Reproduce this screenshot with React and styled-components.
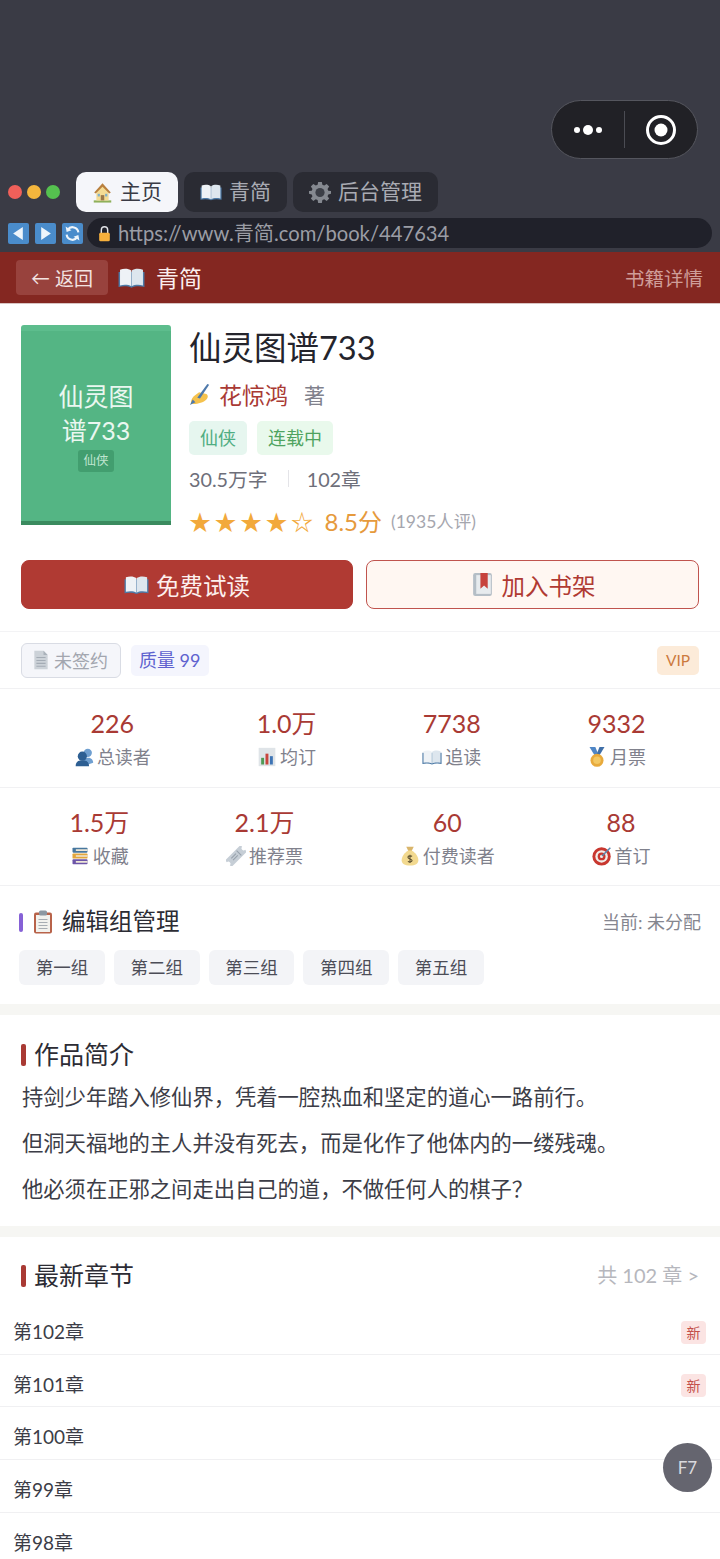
import React from "react"
import styled, { createGlobalStyle } from "styled-components"

const Global = createGlobalStyle`
  html, body { margin: 0; padding: 0; background: #fff; }
  body { font-family: Lato, "Noto Sans CJK SC", "Noto Sans", sans-serif; color: #2c2c34; }
  * { box-sizing: border-box; }
`

const Page = styled.div`
  width: 720px;
  height: 1559px;
  overflow: hidden;
  position: relative;
  background: #fff;
`

/* browser chrome */
const Chrome = styled.div`
  background: #3a3b45;
  height: 252px;
  display: flex;
  flex-direction: column;
`
const CapsuleRow = styled.div`
  height: 172px;
  padding: 100px 22px 0 0;
  display: flex;
  justify-content: flex-end;
  align-items: flex-start;
`
const Capsule = styled.div`
  width: 147px;
  height: 59px;
  border-radius: 30px;
  background: #212126;
  border: 1px solid #55565e;
  display: flex;
  align-items: center;
`
const CapsuleHalf = styled.div`
  flex: 1;
  display: flex;
  align-items: center;
  justify-content: center;
  gap: 3px;
`
const CapsuleLine = styled.div`
  width: 1px;
  height: 37px;
  background: #4b4c53;
`
const MenuDot = styled.span`
  width: ${p => p.$size}px;
  height: ${p => p.$size}px;
  border-radius: 50%;
  background: #fff;
`
const TabRow = styled.div`
  display: flex;
  align-items: center;
  height: 40px;
  padding-left: 8px;
`
const Light = styled.span`
  width: 14px;
  height: 14px;
  border-radius: 50%;
  margin-right: 5px;
  background: ${p => p.$color};
`
const Tabs = styled.div`
  display: flex;
  gap: 6px;
  margin-left: 11px;
`
const Tab = styled.div`
  height: 40px;
  padding: 0 16px;
  border-radius: 10px;
  display: flex;
  align-items: center;
  gap: 7px;
  font-size: 21px;
  background: ${p => (p.$active ? "#f5f6fa" : "#2a2b33")};
  color: ${p => (p.$active ? "#3a3b45" : "#a9abb3")};
`
const TabLabel = styled.span`
  padding-bottom: 4px;
`
const AddressRow = styled.div`
  display: flex;
  align-items: center;
  height: 30px;
  margin-top: 6px;
  padding: 0 8px;
  gap: 6px;
`
const NavKey = styled.span`
  width: 21px;
  height: 21px;
  flex: none;
  border-radius: 2px;
  background: #4a8ccb;
  display: flex;
  align-items: center;
  justify-content: center;
`
const AddressBar = styled.div`
  flex: 1;
  height: 30px;
  margin-left: -2px;
  border-radius: 15px;
  background: #20212a;
  color: #9b9da5;
  font-size: 20.2px;
  display: flex;
  align-items: center;
  gap: 5px;
  padding-left: 9px;
  white-space: nowrap;
`
const AddressText = styled.span`
  padding-bottom: 2px;
`

/* red header */
const Header = styled.header`
  height: 52px;
  background: #842721;
  border-bottom: 1px solid #d9c4c2;
  display: flex;
  align-items: center;
  padding: 0 17px 0 16px;
`
const BackButton = styled.div`
  width: 92px;
  height: 35px;
  border-radius: 4px;
  background: #98423d;
  color: #f3e3e1;
  font-size: 19px;
  display: flex;
  align-items: center;
  justify-content: center;
  gap: 5px;
`
const BrandName = styled.div`
  font-size: 23px;
  color: #fbeeee;
  margin-left: 10px;
  display: flex;
  align-items: center;
  gap: 11px;
`
const BrandText = styled.span`
  padding-bottom: 2px;
`
const HeaderRight = styled.div`
  margin-left: auto;
  font-size: 19.5px;
  color: #cf9d99;
`

/* book info */
const Info = styled.section`
  padding: 21px 21px 0;
  border-bottom: 1px solid #f3f3f5;
  height: 328px;
`
const InfoTop = styled.div`
  display: flex;
  gap: 18px;
`
const Cover = styled.div`
  width: 150px;
  height: 200px;
  flex: none;
  background: #54b584;
  border-top: 6px solid #5dbd8d;
  border-bottom: 4px solid #3a8b5f;
  border-radius: 3px 3px 0 0;
  color: #eaf7f0;
  display: flex;
  flex-direction: column;
  align-items: center;
  justify-content: center;
  text-align: center;
  padding-bottom: 1px;
`
const CoverTitle = styled.div`
  font-size: 25px;
  line-height: 34px;
  width: 90px;
  word-break: break-all;
`
const CoverTag = styled.div`
  margin-top: 3px;
  height: 22px;
  padding: 0 5px;
  border-radius: 3px;
  font-size: 12.5px;
  line-height: 22px;
  background: #429e6f;
  color: #bfe5d0;
`
const Meta = styled.div`
  flex: 1;
  min-width: 0;
`
const Title = styled.h1`
  margin: 0;
  height: 46px;
  font-size: 32.5px;
  font-weight: 400;
  line-height: 46px;
  color: #24242c;
`
const AuthorRow = styled.div`
  margin-top: 6px;
  height: 34px;
  display: flex;
  align-items: center;
  font-size: 23px;
  color: #a93a34;
  gap: 8px;
`
const AuthorSuffix = styled.span`
  font-size: 21px;
  color: #80818c;
  margin-left: 8px;
`
const TagRow = styled.div`
  display: flex;
  gap: 10px;
  margin-top: 10px;
`
const Tag = styled.span`
  height: 34px;
  padding: 0 11px;
  border-radius: 5px;
  font-size: 18px;
  line-height: 34px;
  background: ${p => p.$bg};
  color: ${p => p.$color};
`
const CountRow = styled.div`
  display: flex;
  align-items: center;
  height: 30px;
  margin-top: 8px;
  font-size: 19.8px;
  color: #6e6f7a;
`
const CountLine = styled.span`
  width: 1px;
  height: 17px;
  background: #e4e4e8;
  margin: 0 18px 0 20px;
`
const RatingRow = styled.div`
  display: flex;
  align-items: center;
  height: 34px;
  margin-top: 10px;
`
const Stars = styled.span`
  font-size: 22px;
  letter-spacing: 3.5px;
  color: #f2a93b;
  white-space: nowrap;
`
const Score = styled.span`
  font-size: 24px;
  color: #e69a3c;
  margin-left: 8px;
`
const ScoreCount = styled.span`
  font-size: 17.5px;
  color: #a5a6ae;
  margin-left: 9px;
`
const ActionRow = styled.div`
  display: grid;
  grid-template-columns: 332px 333px;
  gap: 13px;
  margin-top: 23px;
`
const Action = styled.div`
  height: 49px;
  border-radius: 8px;
  display: flex;
  align-items: center;
  justify-content: center;
  gap: 7px;
  font-size: 23.5px;
  background: ${p => (p.$solid ? "#b03a33" : "#fff7f2")};
  color: ${p => (p.$solid ? "#fdf0ee" : "#b03a33")};
  border: 1.5px solid ${p => (p.$solid ? "#b03a33" : "#c0544e")};
`

/* badges */
const BadgeRow = styled.div`
  height: 57px;
  padding: 0 21px;
  display: flex;
  align-items: center;
  gap: 10px;
  border-bottom: 1px solid #f1f1f3;
`
const Unsigned = styled.div`
  height: 35px;
  padding: 0 12px 0 9px;
  border-radius: 6px;
  background: #f5f6fa;
  border: 1.5px solid #d9dce4;
  color: #a3a6af;
  font-size: 18px;
  display: flex;
  align-items: center;
  gap: 3px;
`
const Quality = styled.div`
  height: 31px;
  padding: 0 8px;
  border-radius: 5px;
  background: #f4f5fd;
  color: #5e62cf;
  font-size: 18px;
  line-height: 31px;
`
const Vip = styled.div`
  margin-left: auto;
  height: 29px;
  width: 42px;
  text-align: center;
  border-radius: 5px;
  background: #fcebd9;
  color: #cc7a3e;
  font-size: 15.5px;
  line-height: 29px;
`

/* numbers */
const StatRow = styled.div`
  height: ${p => p.$h}px;
  display: flex;
  justify-content: space-around;
  padding: 0 21px;
  border-bottom: 1px solid #f1f1f3;
`
const Stat = styled.div`
  display: flex;
  flex-direction: column;
  align-items: center;
  padding-top: 16px;
`
const StatValue = styled.div`
  font-size: 25px;
  line-height: 36px;
  color: #a93a34;
`
const StatLabel = styled.div`
  font-size: 18px;
  line-height: 26px;
  margin-top: 3px;
  color: #80818c;
  display: flex;
  align-items: center;
  gap: 3px;
`

/* editor group */
const EditorSection = styled.section`
  height: 118px;
  padding: 18px 19px 0;
`
const SectionHead = styled.div`
  display: flex;
  align-items: center;
  height: 36px;
`
const HeadMark = styled.span`
  width: ${p => p.$w}px;
  height: ${p => p.$h}px;
  margin-right: 8px;
  border-radius: 2px;
  background: ${p => p.$color};
  flex: none;
`
const HeadIcon = styled.span`
  margin-right: 7px;
`
const SectionTitle = styled.h2`
  margin: 0;
  padding-bottom: 5px;
  font-size: ${p => p.$size}px;
  font-weight: 400;
  color: #2c2c34;
`
const SectionNote = styled.span`
  margin-left: auto;
  padding-bottom: 3px;
  font-size: ${p => p.$size}px;
  color: ${p => p.$color};
`
const GroupRow = styled.div`
  display: flex;
  gap: 9px;
  margin-top: 10px;
`
const GroupChip = styled.div`
  width: 85.8px;
  height: 35px;
  border-radius: 6px;
  background: #f3f4f7;
  color: #4c4d57;
  font-size: 17.5px;
  line-height: 35px;
  text-align: center;
`
const Band = styled.div`
  height: 11px;
  background: #f6f6f3;
`

/* intro */
const IntroSection = styled.section`
  height: 211px;
  padding: 22px 21px 0;
`
const IntroText = styled.p`
  margin: ${p => p.$top}px 0 0 1px;
  font-size: 21.3px;
  line-height: 30px;
  color: #3c3d47;
  white-space: nowrap;
`

/* chapters */
const ChapterHead = styled.div`
  height: 65px;
  padding: 13px 21px 0;
  display: flex;
  align-items: center;
`
const ChapterRow = styled.div`
  height: 52.7px;
  padding: 5px 14px 0 13px;
  display: flex;
  align-items: center;
  font-size: 19px;
  color: #3c3d47;
  border-bottom: 1px solid #f0f0f2;
`
const NewMark = styled.span`
  margin: 4px 0 0 auto;
  width: 25px;
  height: 23px;
  border-radius: 4px;
  background: #fbe4e3;
  color: #c3504a;
  font-size: 14px;
  line-height: 23px;
  text-align: center;
`
const Float = styled.div`
  position: absolute;
  left: 663px;
  top: 1443px;
  width: 49px;
  height: 49px;
  border-radius: 50%;
  background: #65656f;
  color: #d9d9de;
  font-size: 17px;
  line-height: 49px;
  text-align: center;
`

const IconSvg = styled.svg`
  width: ${p => p.$size}px;
  height: ${p => p.$size}px;
  flex: none;
  display: block;
`

// small drawings standing in for the colour emoji of the screenshot
const drawings = {
  house: (
    <>
      <path d="M2 21h20v2.500H2z" fill="#8fb05a" />
      <path d="M5 11l7-7 7 7v10H5z" fill="#f5dc94" />
      <path d="M12 1.500L2.500 12l1.800 1.200L12 5.500l7.700 7.700 1.800-1.200z" fill="#b9803f" />
      <path d="M10 15h4v6h-4z" fill="#9c7a4a" />
      <rect x="6.500" y="13.500" width="2.500" height="3" fill="#7fb0cc" />
      <rect x="15" y="13.500" width="2.500" height="3" fill="#7fb0cc" />
    </>
  ),
  book: (
    <>
      <path d="M.5 7h23v13.500c-4-1-8-1-11.500.5-3.500-1.500-7.500-1.500-11.500-.5z" fill="#4d7aa6" />
      <path d="M1.800 5c3.700-1.300 7.700-1 10 .8v14c-2.300-1.500-6.300-1.700-10-.8z" fill="#eef2f6" />
      <path d="M22.200 5c-3.700-1.300-7.700-1-10 .8v14c2.300-1.500 6.300-1.700 10-.8z" fill="#dde6ee" />
    </>
  ),
  gear: (
    <>
      <path
        d="M10 1h4l.6 3.200 2 .8L19.300 3.200 22 6l-1.800 2.600.8 2L24 11v3l-3 .6-.8 2L22 19l-2.700 2.800-2.700-1.800-2 .8L14 24h-4l-.6-3.200-2-.8L4.700 21.800 2 19l1.800-2.400-.8-2L0 14v-3l3-.4.8-2L2 6l2.700-2.800L7.400 5l2-.8z"
        fill="#858990"
      />
      <circle cx="12" cy="12.500" r="5" fill="#3c3f47" />
    </>
  ),
  lock: (
    <>
      <path d="M7.500 12V7a4.500 4.500 0 019 0v5" fill="none" stroke="#e2e3e8" strokeWidth="2" />
      <rect x="4.500" y="11" width="15" height="12" rx="2" fill="#f7b03c" />
    </>
  ),
  writing: (
    <>
      <path d="M2 22c0-4 2-7 5-9l4-3 3 1 5 1c2 1 2 4 0 6-3 3-9 5-14 5z" fill="#f5c24d" />
      <path d="M20 1l2 1-10 15-3-1z" fill="#4e79ab" />
      <path d="M1 24l3-6 3 3z" fill="#4e79ab" />
    </>
  ),
  bookmark: (
    <>
      <rect x="3" y="1" width="18" height="22" rx="2" fill="#b5bec6" />
      <rect x="6" y="3" width="14" height="18" fill="#e7ebee" />
      <path d="M10 1h7v15l-3.500-3-3.500 3z" fill="#c7423c" />
    </>
  ),
  doc: (
    <>
      <path d="M4 1h11l5 5v17H4z" fill="#ccd2d8" />
      <path d="M15 1l5 5h-5z" fill="#aab2ba" />
      <path d="M6.500 9h11M6.500 12.500h11M6.500 16h11M6.500 19.500h11" stroke="#a4acb5" strokeWidth="1.300" />
    </>
  ),
  users: (
    <>
      <circle cx="16.500" cy="7" r="5" fill="#6f9fd0" />
      <path d="M10 21c0-5 3-8 7-8s6 3 6 6l-6 2z" fill="#6f9fd0" />
      <circle cx="10" cy="11" r="5.500" fill="#2d5f93" />
      <path d="M2 23c0-5 3-7 8-7s8 2 8 7z" fill="#2d5f93" />
    </>
  ),
  chart: (
    <>
      <rect x="2" y="1" width="20" height="22" fill="#dfe4e8" />
      <rect x="5" y="13" width="3.500" height="8" fill="#4f9a55" />
      <rect x="10.200" y="8" width="3.500" height="13" fill="#c8453d" />
      <rect x="15.500" y="11" width="3.500" height="10" fill="#3d74b5" />
    </>
  ),
  medal: (
    <>
      <path d="M3 0h7l4 10H9z" fill="#4f86c6" />
      <path d="M21 0h-6l-4 10h4z" fill="#3f6fa8" />
      <circle cx="12" cy="16" r="7.800" fill="#e8aa3c" />
      <circle cx="12" cy="16" r="4.500" fill="#f3c863" />
    </>
  ),
  books: (
    <>
      <rect x="3" y="2" width="18" height="6" rx="1" fill="#47779e" />
      <rect x="3" y="9" width="18" height="6" rx="1" fill="#e2a63d" />
      <rect x="3" y="16" width="18" height="6" rx="1" fill="#6d55a8" />
      <path d="M7 4h14v2H7zM7 11h14v2H7zM7 18h14v2H7z" fill="#eee7d8" />
    </>
  ),
  ticket: (
    <g transform="rotate(-45 12 12)">
      <path d="M-1 6.500h26v3a2.500 2.500 0 000 5v3H-1v-3a2.500 2.500 0 000-5z" fill="#c6ced6" />
      <path d="M6 10h8M6 13h8M17 8v8" stroke="#98a2ad" strokeWidth="1.300" />
    </g>
  ),
  money: (
    <>
      <path d="M7.500 1h9l-2.500 5h-4z" fill="#d9b56a" />
      <path d="M10 5.500h4c5.500 3 8 8 8 11.500 0 4-3.500 6.500-10 6.500S2 21 2 17c0-3.500 2.500-8.500 8-11.500z" fill="#f2d98f" />
      <path
        d="M14.500 12.500c-1-1-5-1-5 1 0 2.500 5 1.500 5 4 0 2-4 2-5 1M12 10.500v10"
        fill="none"
        stroke="#5d5131"
        strokeWidth="1.300"
      />
    </>
  ),
  target: (
    <>
      <circle cx="11.500" cy="12.500" r="11" fill="#c8372f" />
      <circle cx="11.500" cy="12.500" r="7.500" fill="#f1ece8" />
      <circle cx="11.500" cy="12.500" r="4.700" fill="#c8372f" />
      <circle cx="11.500" cy="12.500" r="1.900" fill="#f1ece8" />
      <path d="M12 12L22 2" stroke="#5b86ad" strokeWidth="1.800" />
    </>
  ),
  clipboard: (
    <>
      <rect x="3" y="2.500" width="18" height="21" rx="2" fill="#b8634a" />
      <rect x="5" y="5" width="14" height="17" fill="#f2f2ee" />
      <rect x="8" y="0.500" width="8" height="5" rx="1.500" fill="#8c98a2" />
      <path d="M7.500 9.500h9M7.500 12.500h9M7.500 15.500h9M7.500 18.500h9" stroke="#a7adb3" strokeWidth="1.200" />
    </>
  ),
}

const Emoji = ({ name, size = 20 }) => (
  <IconSvg $size={size} viewBox="0 0 24 24">
    {drawings[name]}
  </IconSvg>
)

const statsTop = [
  ["226", "users", "总读者"],
  ["1.0万", "chart", "均订"],
  ["7738", "book", "追读"],
  ["9332", "medal", "月票"],
]
const statsBottom = [
  ["1.5万", "books", "收藏"],
  ["2.1万", "ticket", "推荐票"],
  ["60", "money", "付费读者"],
  ["88", "target", "首订"],
]
const groups = ["第一组", "第二组", "第三组", "第四组", "第五组"]
const chapters = ["第102章", "第101章", "第100章", "第99章", "第98章"]

const StatBlock = ({ items, h }) => (
  <StatRow $h={h}>
    {items.map(([value, icon, label]) => (
      <Stat key={label}>
        <StatValue>{value}</StatValue>
        <StatLabel>
          <Emoji name={icon} size={20} />
          {label}
        </StatLabel>
      </Stat>
    ))}
  </StatRow>
)

export default function App() {
  return (
    <Page>
      <Global />
      <Chrome>
        <CapsuleRow>
          <Capsule>
            <CapsuleHalf>
              <MenuDot $size={6} />
              <MenuDot $size={10} />
              <MenuDot $size={6} />
            </CapsuleHalf>
            <CapsuleLine />
            <CapsuleHalf>
              <IconSvg $size={32} viewBox="0 0 32 32">
                <circle cx="16" cy="16" r="13.500" fill="none" stroke="#fff" strokeWidth="3" />
                <circle cx="16" cy="16" r="6.500" fill="#fff" />
              </IconSvg>
            </CapsuleHalf>
          </Capsule>
        </CapsuleRow>
        <TabRow>
          <Light $color="#f0605a" />
          <Light $color="#f4b63d" />
          <Light $color="#55c14f" />
          <Tabs>
            <Tab $active>
              <Emoji name="house" size={21} />
              <TabLabel>主页</TabLabel>
            </Tab>
            <Tab>
              <Emoji name="book" size={22} />
              <TabLabel>青简</TabLabel>
            </Tab>
            <Tab>
              <Emoji name="gear" size={22} />
              <TabLabel>后台管理</TabLabel>
            </Tab>
          </Tabs>
        </TabRow>
        <AddressRow>
          <NavKey>
            <IconSvg $size={15} viewBox="0 0 14 14">
              <path d="M11 1v12L2 7z" fill="#eef5fb" />
            </IconSvg>
          </NavKey>
          <NavKey>
            <IconSvg $size={15} viewBox="0 0 14 14">
              <path d="M3 1v12l9-6z" fill="#eef5fb" />
            </IconSvg>
          </NavKey>
          <NavKey>
            <IconSvg $size={17} viewBox="0 0 16 16">
              <path
                d="M13.500 7A5.500 5.500 0 003.500 4.500M2.500 9a5.500 5.500 0 0010 2.500"
                fill="none"
                stroke="#eef5fb"
                strokeWidth="2"
              />
              <path d="M1.500 1.500l1 5 4.500-1.500zM14.500 14.500l-1-5-4.500 1.500z" fill="#eef5fb" />
            </IconSvg>
          </NavKey>
          <AddressBar>
            <Emoji name="lock" size={17} />
            <AddressText>https://www.青简.com/book/447634</AddressText>
          </AddressBar>
        </AddressRow>
      </Chrome>

      <Header>
        <BackButton>
          <span>←</span>
          <span>返回</span>
        </BackButton>
        <BrandName>
          <Emoji name="book" size={27} />
          <BrandText>青简</BrandText>
        </BrandName>
        <HeaderRight>书籍详情</HeaderRight>
      </Header>

      <Info>
        <InfoTop>
          <Cover>
            <CoverTitle>仙灵图谱733</CoverTitle>
            <CoverTag>仙侠</CoverTag>
          </Cover>
          <Meta>
            <Title>仙灵图谱733</Title>
            <AuthorRow>
              <Emoji name="writing" size={22} />
              花惊鸿
              <AuthorSuffix>著</AuthorSuffix>
            </AuthorRow>
            <TagRow>
              <Tag $bg="#e6f6ef" $color="#4fad82">仙侠</Tag>
              <Tag $bg="#e9f9ec" $color="#4fa35f">连载中</Tag>
            </TagRow>
            <CountRow>
              30.5万字
              <CountLine />
              102章
            </CountRow>
            <RatingRow>
              <Stars>★★★★☆</Stars>
              <Score>8.5分</Score>
              <ScoreCount>(1935人评)</ScoreCount>
            </RatingRow>
          </Meta>
        </InfoTop>
        <ActionRow>
          <Action $solid>
            <Emoji name="book" size={25} />
            免费试读
          </Action>
          <Action>
            <Emoji name="bookmark" size={25} />
            加入书架
          </Action>
        </ActionRow>
      </Info>

      <BadgeRow>
        <Unsigned>
          <Emoji name="doc" size={20} />
          未签约
        </Unsigned>
        <Quality>质量 99</Quality>
        <Vip>VIP</Vip>
      </BadgeRow>

      <StatBlock items={statsTop} h={99} />
      <StatBlock items={statsBottom} h={98} />

      <EditorSection>
        <SectionHead>
          <HeadMark $w={4} $h={19} $color="#8661d6" />
          <HeadIcon>
            <Emoji name="clipboard" size={24} />
          </HeadIcon>
          <SectionTitle $size={23.5}>编辑组管理</SectionTitle>
          <SectionNote $size={18} $color="#85868f">当前: 未分配</SectionNote>
        </SectionHead>
        <GroupRow>
          {groups.map(g => (
            <GroupChip key={g}>{g}</GroupChip>
          ))}
        </GroupRow>
      </EditorSection>
      <Band />

      <IntroSection>
        <SectionHead>
          <HeadMark $w={5} $h={22} $color="#a93a34" />
          <SectionTitle $size={25}>作品简介</SectionTitle>
        </SectionHead>
        <IntroText $top={9}>持剑少年踏入修仙界，凭着一腔热血和坚定的道心一路前行。</IntroText>
        <IntroText $top={16}>但洞天福地的主人并没有死去，而是化作了他体内的一缕残魂。</IntroText>
        <IntroText $top={16}>他必须在正邪之间走出自己的道，不做任何人的棋子？</IntroText>
      </IntroSection>
      <Band />

      <ChapterHead>
        <HeadMark $w={5} $h={22} $color="#a93a34" />
        <SectionTitle $size={25}>最新章节</SectionTitle>
        <SectionNote $size={20} $color="#b6b7bd">共 102 章 &gt;</SectionNote>
      </ChapterHead>
      {chapters.map((c, i) => (
        <ChapterRow key={c}>
          {c}
          {i < 2 ? <NewMark>新</NewMark> : null}
        </ChapterRow>
      ))}
      <Float>F7</Float>
    </Page>
  )
}
